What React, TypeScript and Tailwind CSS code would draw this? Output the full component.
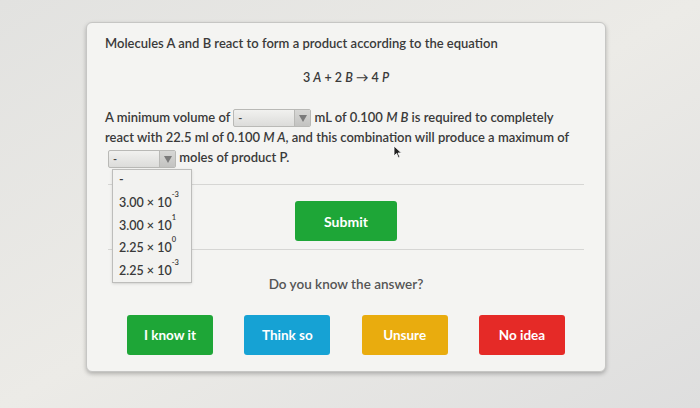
import React from "react";

const font = { fontFamily: "Lato, 'Liberation Sans', sans-serif" };

// one option in the open list
const Sci = ({ base, exp }: { base: string; exp: string }) => (
  <span>
    {base} × 10
    <span className="inline-block align-top text-[7.5px] leading-none -mt-[1px]">{exp}</span>
  </span>
);

const Select = ({ width }: { width: string }) => (
  <span
    className={`inline-flex align-middle h-[18px] ${width} border border-[#b9b9b6] rounded-[2px] overflow-hidden bg-gradient-to-b from-[#f1f1ef] to-[#dcdcda]`}
  >
    <span className="flex-1 pl-[4px] text-[11px] leading-[16px] text-[#444]">-</span>
    <span className="w-[16px] flex items-center justify-center bg-gradient-to-b from-[#d7d7d5] to-[#c3c3c1] border-l border-[#b9b9b6]">
      <svg width="8" height="7" viewBox="0 0 8 7">
        <path d="M0 0h8L4 7z" fill="#7a7a7a" />
      </svg>
    </span>
  </span>
);

const answers = [
  { label: "I know it", color: "bg-[#1ea637]" },
  { label: "Think so", color: "bg-[#16a2d4]" },
  { label: "Unsure", color: "bg-[#e9ac0e]" },
  { label: "No idea", color: "bg-[#e52a27]" },
];

export default function App() {
  return (
    <div
      className="w-[700px] h-[408px] overflow-hidden bg-gradient-to-br from-[#e2e2e0] via-[#ecebe7] to-[#dedede] pt-[22px] pl-[86px]"
      style={font}
    >
      <div className="relative w-[520px] h-[350px] rounded-md border border-[#c6c6c4] bg-[#f4f4f2] shadow-[0_2px_4px_rgba(0,0,0,0.25)] text-[#3a3a3a]">
        <div className="px-[18px] pt-[11px]">
          <p className="text-[13px] font-semibold leading-[18px]">
            Molecules A and B react to form a product according to the equation
          </p>

          <p className="mt-[17px] text-center text-[12.5px] font-semibold">
            3 <i>A</i> + 2 <i>B</i> → 4 <i>P</i>
          </p>

          <p className="mt-[19px] text-[13px] font-semibold leading-[20px]">
            A minimum volume of <Select width="w-[78px]" /> mL of 0.100 <i>M B</i> is required to completely
            <br />
            react with 22.5 ml of 0.100 <i>M A</i>, and this combination will produce a maximum of
            <br />
            <span className="ml-[3px]">
              <Select width="w-[68px]" />
            </span>{" "}
            moles of product P.
          </p>
        </div>

        {/* submit section */}
        <div className="mt-[16px] mx-[21px] border-t border-b border-[#d6d6d4] h-[66px] flex items-end justify-center pb-[8px]">
          <button className="w-[102px] h-[40px] rounded-[3px] bg-[#1ea637] text-white text-[14px] font-bold">
            Submit
          </button>
        </div>

        <p className="mt-[24px] text-center text-[13.5px] font-semibold text-[#555]">Do you know the answer?</p>

        <div className="mt-[21px] px-[40px] flex justify-between">
          {answers.map((a) => (
            <button
              key={a.label}
              className={`w-[86px] h-[40px] rounded-[3px] ${a.color} text-white text-[13.5px] font-bold`}
            >
              {a.label}
            </button>
          ))}
        </div>

        {/* open dropdown list */}
        <div className="absolute left-[25px] top-[146px] w-[80px] border border-[#bdbdbb] bg-[#f2f2f0] shadow-sm text-[12.5px] font-semibold">
          <div className="h-[22px] pl-[6px] leading-[20px]">-</div>
          {[
            ["3.00", "-3"],
            ["3.00", "1"],
            ["2.25", "0"],
            ["2.25", "-3"],
          ].map(([b, e], i) => (
            <div key={i} className="h-[22.5px] pl-[6px] leading-[22px]">
              <Sci base={b} exp={e} />
            </div>
          ))}
        </div>

        {/* mouse cursor */}
        <svg className="absolute left-[306px] top-[122px]" width="10" height="14" viewBox="0 0 10 14">
          <path d="M1 1v10l2.5-2.5L5.5 13l1.5-.7-2-4.3H8.5z" fill="#222" stroke="#fff" strokeWidth="0.8" />
        </svg>
      </div>
    </div>
  );
}
